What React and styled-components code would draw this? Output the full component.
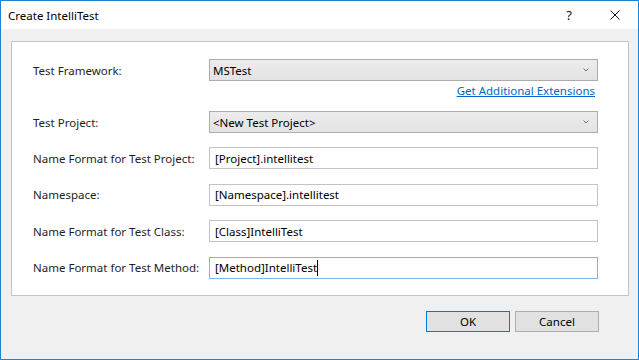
import React from 'react';
import styled, { createGlobalStyle } from 'styled-components';

const GlobalStyle = createGlobalStyle`
  html, body {
    margin: 0;
    padding: 0;
    background: #f0f0f0;
  }
  body {
    font-family: 'Noto Sans', 'Open Sans', sans-serif;
    font-size: 11.5px;
    color: #000;
  }
`;

const fields = [
  { label: 'Name Format for Test Project:', value: '[Project].intellitest' },
  { label: 'Namespace:', value: '[Namespace].intellitest' },
  { label: 'Name Format for Test Class:', value: '[Class]IntelliTest' },
  { label: 'Name Format for Test Method:', value: '[Method]IntelliTest', focused: true },
];

const App = () => {
  return (
    <>
      <GlobalStyle />
      <Window>
        <TitleBar>
          <Caption>Create IntelliTest</Caption>
          <CaptionButton>?</CaptionButton>
          <CaptionButton>
            <svg width='10' height='10' viewBox='0 0 10 10'>
              <path d='M0.5 0.5 L9.5 9.5 M9.5 0.5 L0.5 9.5' stroke='#111' strokeWidth='1' fill='none' />
            </svg>
          </CaptionButton>
        </TitleBar>

        <Body>
          <Panel>
            <Row>
              <Label>Test Framework:</Label>
              <Select>
                MSTest
                <Chevron />
              </Select>
            </Row>
            <LinkRow>
              <Link href='#'>Get Additional Extensions</Link>
            </LinkRow>
            <Row>
              <Label>Test Project:</Label>
              <Select>
                &lt;New Test Project&gt;
                <Chevron />
              </Select>
            </Row>
            <FieldList>
              {fields.map((f) => (
                <Row key={f.label}>
                  <Label>{f.label}</Label>
                  <TextBox $focused={f.focused}>
                    {f.value}
                    {f.focused && <Caret />}
                  </TextBox>
                </Row>
              ))}
            </FieldList>
          </Panel>

          <Footer>
            <Button $default>OK</Button>
            <Button>Cancel</Button>
          </Footer>
        </Body>
      </Window>
    </>
  );
};

const Chevron = () => (
  <ChevronIcon width='6' height='4' viewBox='0 0 6 4'>
    <path d='M0.5 0.5 L3 3 L5.5 0.5' stroke='#707070' strokeWidth='1' fill='none' />
  </ChevronIcon>
);

const Window = styled.div`
  width: 639px;
  height: 360px;
  box-sizing: border-box;
  border: 1px solid #1883d7;
  background: #f0f0f0;
  display: flex;
  flex-direction: column;
`;

const TitleBar = styled.div`
  height: 28px;
  background: #fff;
  display: flex;
  align-items: center;
`;

const Caption = styled.div`
  flex: 1;
  padding-left: 7px;
  font-size: 11.5px;
  color: #000;
`;

const CaptionButton = styled.div`
  width: 46px;
  height: 28px;
  display: flex;
  align-items: center;
  justify-content: center;
  font-size: 13px;
  color: #111;
`;

const Body = styled.div`
  flex: 1;
  padding: 12px 9px 0 10px;
  display: flex;
  flex-direction: column;
`;

const Panel = styled.div`
  background: #fff;
  border: 1px solid #c4c4c4;
  padding: 17px 30px 16px 21px;
  display: flex;
  flex-direction: column;
`;

const Row = styled.div`
  display: grid;
  grid-template-columns: 176px 1fr;
  align-items: center;
  height: 22px;
`;

const FieldList = styled.div`
  display: flex;
  flex-direction: column;
  gap: 14.5px;
  margin-top: 14px;
`;

const Label = styled.div`
  white-space: nowrap;
  color: #1e1e1e;
`;

const Select = styled.div`
  position: relative;
  height: 22px;
  box-sizing: border-box;
  border: 1px solid #acacac;
  background: linear-gradient(#ececec, #e3e3e3);
  padding: 0 20px 0 3px;
  display: flex;
  align-items: center;
  color: #000;
`;

const ChevronIcon = styled.svg`
  position: absolute;
  right: 8px;
  top: 8px;
`;

const LinkRow = styled.div`
  height: 30px;
  display: flex;
  justify-content: flex-end;
  align-items: flex-start;
  padding-right: 3px;
`;

const Link = styled.a`
  color: #0066cc;
  text-decoration: underline;
  margin-top: 2px;
`;

const TextBox = styled.div`
  height: 22px;
  box-sizing: border-box;
  border: 1px solid ${(p) => (p.$focused ? '#7eb4ea' : '#c3c3c3')};
  background: #fff;
  padding: 0 5px;
  display: flex;
  align-items: center;
  color: #000;
`;

const Caret = styled.span`
  display: inline-block;
  width: 1px;
  height: 16px;
  background: #000;
`;

const Footer = styled.div`
  display: flex;
  justify-content: flex-end;
  gap: 5px;
  padding: 15px 30px 0 0;
`;

const Button = styled.button`
  width: 84px;
  height: 21px;
  box-sizing: border-box;
  border: 1px solid ${(p) => (p.$default ? '#0078d7' : '#adadad')};
  background: #e1e1e1;
  font-family: 'Noto Sans', 'Open Sans', sans-serif;
  font-size: 11.5px;
  color: #000;
  padding: 0;
  display: flex;
  align-items: center;
  justify-content: center;
`;

export default App;
